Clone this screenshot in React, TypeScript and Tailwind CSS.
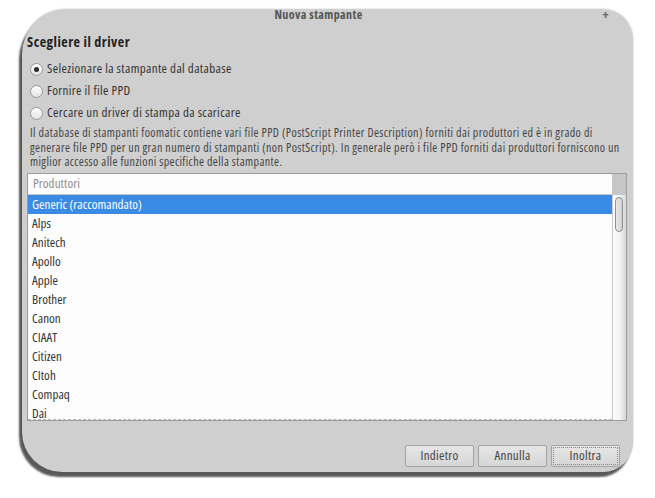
import { useState } from "react";

const producers = [
  "Generic (raccomandato)",
  "Alps",
  "Anitech",
  "Apollo",
  "Apple",
  "Brother",
  "Canon",
  "CIAAT",
  "Citizen",
  "CItoh",
  "Compaq",
  "Dai",
];

const sources = [
  "Selezionare la stampante dal database",
  "Fornire il file PPD",
  "Cercare un driver di stampa da scaricare",
];

function Radio({ checked, label, onClick }: { checked: boolean; label: string; onClick: () => void }) {
  return (
    <button type="button" onClick={onClick} className="flex h-[22px] items-center gap-[4px] text-left">
      <span className="flex h-[13px] w-[13px] items-center justify-center rounded-full border border-[#9a9a9a] bg-gradient-to-b from-[#fdfdfd] to-[#e4e4e4]">
        {checked && <span className="h-[5px] w-[5px] rounded-full bg-[#2c2c2c]" />}
      </span>
      <span className="text-[13px] tracking-[0.35px] text-[#333]">{label}</span>
    </button>
  );
}

export default function App() {
  const [source, setSource] = useState(0);
  const [selected, setSelected] = useState(0);

  return (
    <div className="h-[498px] w-[655px] overflow-hidden bg-white pl-[22px] pt-[10px] font-['Open_Sans','Noto_Sans',sans-serif] text-[12px] font-stretch-condensed">
      <div className="flex h-[462px] w-[611px] flex-col rounded-tl-[44px] rounded-tr-[30px] rounded-bl-[40px] rounded-br-[30px] bg-[#cfcfcf] shadow-[-3px_5px_2px_rgba(0,0,0,0.65),0_-1px_2px_rgba(0,0,0,0.25)]">
        <div className="relative h-[12px] pr-[18px] text-center text-[12px] font-bold leading-[9px] tracking-[0.4px] text-[#555]">
          Nuova stampante
          <span className="absolute right-[24px] top-[-1px] text-[13px] leading-[10px] text-[#666]">+</span>
        </div>

        <h1 className="ml-[5px] mt-[11px] text-[14px] font-bold leading-[18px] tracking-[0.5px] text-[#222]">
          Scegliere il driver
        </h1>

        <div className="ml-[8px] mt-[7px] flex flex-col">
          {sources.map((s, i) => (
            <Radio key={s} label={s} checked={source === i} onClick={() => setSource(i)} />
          ))}
        </div>

        <p className="ml-[8px] mt-[2px] whitespace-nowrap leading-[14.5px] tracking-[0.4px] text-[#444]">
          Il database di stampanti foomatic contiene vari file PPD (PostScript Printer Description) forniti dai produttori ed è in grado di
          <br />
          generare file PPD per un gran numero di stampanti (non PostScript). In generale però i file PPD forniti dai produttori forniscono un
          <br />
          miglior accesso alle funzioni specifiche della stampante.
        </p>

        <div className="ml-[5px] mr-[6px] mt-[3px] flex h-[248px] border border-[#9c9c9c] bg-[#fcfcfc]">
          <div className="flex min-w-0 flex-1 flex-col">
            <div className="flex h-[21px] shrink-0 items-center border-b border-[#c9c9c9] pl-[5px] pt-[1px] text-[13px] tracking-[0.1px] text-[#8e8e8e]">
              Produttori
            </div>
            <ul className="min-h-0 flex-1 overflow-hidden border-b border-dashed border-[#b5b5b5] text-[13px] tracking-[0.05px]">
              {producers.map((p, i) => (
                <li
                  key={p}
                  onClick={() => setSelected(i)}
                  className={
                    selected === i
                      ? "flex h-[19px] items-center bg-[#3a8be3] pl-[4px] pt-[1px] text-white"
                      : "flex h-[19px] items-center pl-[4px] pt-[1px] text-[#333]"
                  }
                >
                  {p}
                </li>
              ))}
            </ul>
          </div>
          <div className="flex w-[14px] shrink-0 flex-col border-l border-[#c9c9c9]">
            <div className="h-[21px] shrink-0 bg-[#c6c6c6]" />
            <div className="flex-1 bg-gradient-to-r from-[#fbfbfb] via-[#f4f4f4] to-[#d8d8d8] pl-[2px] pt-[2px]">
              <div className="h-[35px] w-[8px] rounded-full border border-[#8f8f8f] bg-gradient-to-r from-[#e9e9e9] to-[#d2d2d2]" />
            </div>
          </div>
        </div>

        <div className="mr-[13px] mt-[24px] flex justify-end gap-[4px]">
          {["Indietro", "Annulla", "Inoltra"].map((b, i) => (
            <button
              key={b}
              type="button"
              className="flex h-[22px] w-[69px] items-center justify-center rounded-[2px] border border-[#a3a3a3] bg-gradient-to-b from-[#e6e6e6] to-[#d6d6d6] text-[13px] tracking-[0.3px] text-[#444]"
            >
              <span
                className={
                  i === 2
                    ? "flex h-[18px] w-[65px] items-center justify-center border border-dotted border-[#888]"
                    : "flex h-[18px] w-[65px] items-center justify-center"
                }
              >
                {b}
              </span>
            </button>
          ))}
        </div>
      </div>
    </div>
  );
}
